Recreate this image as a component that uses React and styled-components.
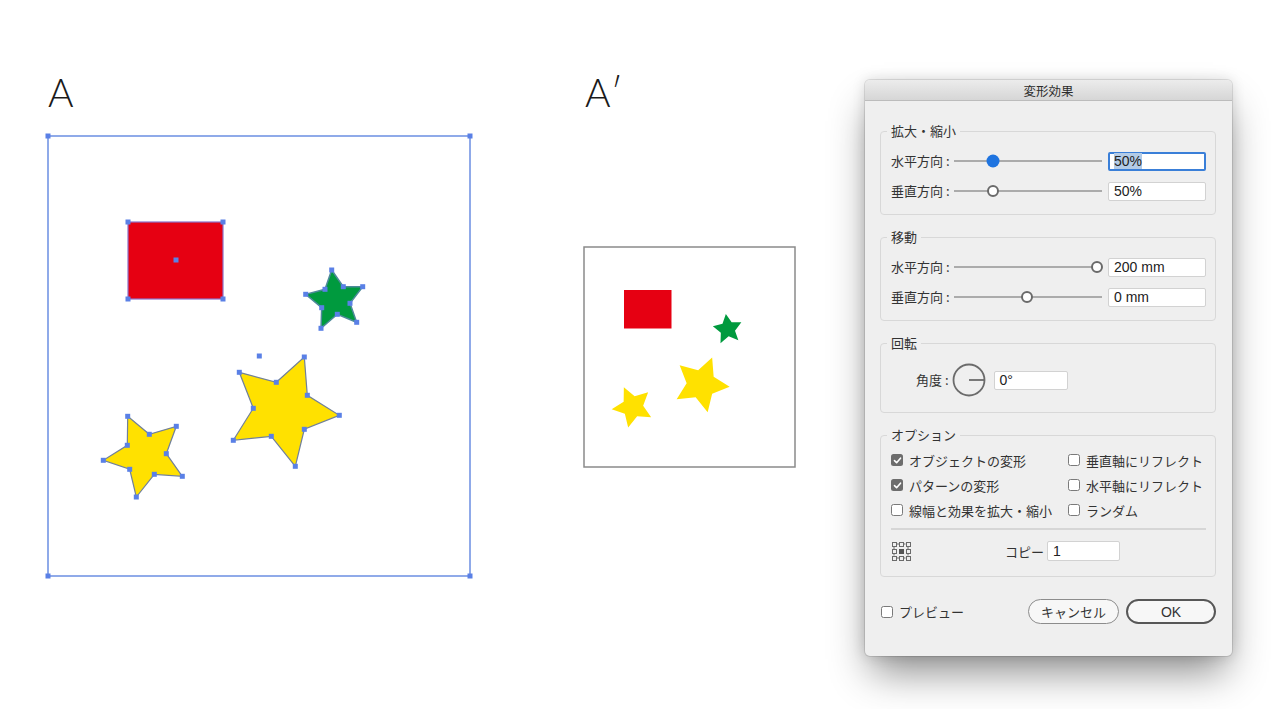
import React from 'react';
import styled, { createGlobalStyle } from 'styled-components';

const GlobalStyle = createGlobalStyle`
  html, body {
    margin: 0;
    padding: 0;
    background: #ffffff;
  }
  body {
    font-family: "Noto Sans CJK JP", "Noto Sans", sans-serif;
    overflow: hidden;
  }
`;

const Page = styled.div`
  width: 1271px;
  height: 709px;
  box-sizing: border-box;
  padding-left: 45px;
  display: flex;
  align-items: flex-start;
  background: #fff;
`;

const ArtColumn = styled.div`
  display: flex;
  flex-direction: column;
  margin-right: ${(p) => p.gap}px;
`;

const ArtLabel = styled.div`
  height: 45px;
  margin-top: 70px;
  padding-left: ${(p) => p.indent}px;
  font-family: Lato, "Noto Sans", sans-serif;
  font-weight: 300;
  font-size: 39px;
  line-height: 45px;
  color: #1a1a1a;
`;

const ArtBoard = styled.svg`
  display: block;
  margin-top: ${(p) => p.offset}px;
`;

/* ---------- dialog ---------- */

const Dialog = styled.div`
  width: 367px;
  margin-top: 80px;
  background: #efefef;
  border-radius: 5px;
  overflow: hidden;
  box-shadow: 0 22px 38px -6px rgba(0, 0, 0, 0.45), 0 0 14px rgba(0, 0, 0, 0.14),
    0 0 0 1px rgba(0, 0, 0, 0.1);
  padding-bottom: 32px;
  color: #333;
  font-size: 13px;
`;

const TitleBar = styled.div`
  height: 20px;
  border-bottom: 1px solid #bcbcbc;
  background: linear-gradient(#ececec, #d6d6d6);
  display: flex;
  align-items: center;
  justify-content: center;
  font-size: 12.5px;
  color: #2c2c2c;
`;

const Body = styled.div`
  padding: 22px 16px 0 15px;
`;

const Group = styled.fieldset`
  margin: 0 0 ${(p) => (p.last ? 0 : 14)}px;
  border: 1px solid #d8d8d8;
  border-radius: 4px;
  padding: ${(p) => p.pad || '11px 9px 12px 10px'};
  min-width: 0;
`;

const Legend = styled.legend`
  padding: 0 4px;
  margin-left: -4px;
  font-size: 13px;
  line-height: 16px;
  color: #333;
`;

const Stack = styled.div`
  display: flex;
  flex-direction: column;
  gap: 8px;
`;

const SliderRow = styled.div`
  display: grid;
  grid-template-columns: auto 1fr 98px;
  align-items: center;
  height: 22px;
`;

const RowLabel = styled.span`
  font-size: 13px;
  line-height: 16px;
  color: #333;
  white-space: nowrap;
`;

const Track = styled.div`
  position: relative;
  height: 1.5px;
  background: #ababab;
  margin: 0 6px 0 4px;
`;

const Thumb = styled.span`
  position: absolute;
  top: 50%;
  transform: translate(-50%, -50%);
  border-radius: 50%;
  box-sizing: border-box;
  width: ${(p) => (p.active ? 13 : 12)}px;
  height: ${(p) => (p.active ? 13 : 12)}px;
  background: ${(p) => (p.active ? '#1f74e0' : '#fff')};
  border: ${(p) => (p.active ? 'none' : '2px solid #6a6a6a')};
`;

const Field = styled.div`
  box-sizing: border-box;
  width: ${(p) => p.w || 98}px;
  height: ${(p) => p.h || 19}px;
  background: #fff;
  border: ${(p) => (p.focused ? '2px solid #3a7fd8' : '1px solid #d2d2d2')};
  border-radius: 2px;
  padding: 0 ${(p) => (p.focused ? 4 : 5)}px;
  display: flex;
  align-items: center;
  font-family: "Liberation Sans", Arial, sans-serif;
  font-size: 14px;
  color: #222;
`;

const Selected = styled.span`
  background: #b3cbe6;
`;

const RotateRow = styled.div`
  display: flex;
  align-items: center;
  height: 34px;
  padding-left: 25px;
`;

const Dial = styled.svg`
  display: block;
  margin: 0 8px 0 3px;
`;

const CheckGrid = styled.div`
  display: grid;
  grid-template-columns: 177px 1fr;
  row-gap: 7px;
`;

const CheckItem = styled.label`
  display: flex;
  align-items: center;
  gap: 6px;
  height: 18px;
  font-size: 13px;
  color: #333;
  white-space: nowrap;
`;

const Box = styled.span`
  width: 12px;
  height: 12px;
  box-sizing: border-box;
  border-radius: 2.5px;
  flex: none;
  display: flex;
  align-items: center;
  justify-content: center;
  background: ${(p) => (p.checked ? '#6d6d6d' : '#fff')};
  border: ${(p) => (p.checked ? 'none' : '1px solid #7a7a7a')};
`;

const Separator = styled.div`
  height: 2px;
  background: #d6d6d6;
  margin-top: 9px;
`;

const CopyRow = styled.div`
  display: flex;
  align-items: center;
  height: 20px;
  margin-top: 11px;
`;

const CopyLabel = styled.span`
  margin: 0 3px 0 94px;
  font-size: 13px;
  color: #333;
`;

const Footer = styled.div`
  display: flex;
  align-items: center;
  justify-content: space-between;
  padding: 0 16px;
  margin-top: 22px;
  height: 25px;
`;

const Buttons = styled.div`
  display: flex;
  gap: 7px;
`;

const Pill = styled.button`
  box-sizing: border-box;
  height: 25px;
  width: ${(p) => (p.primary ? 90 : 91)}px;
  border-radius: 13px;
  background: #f7f7f7;
  border: ${(p) => (p.primary ? '2px solid #575757' : '1px solid #8c8c8c')};
  font-family: ${(p) =>
    p.primary ? '"Liberation Sans", Arial, sans-serif' : '"Noto Sans CJK JP", sans-serif'};
  font-size: ${(p) => (p.primary ? 14 : 13)}px;
  color: #333;
  padding: 0;
`;

/* ---------- art data ---------- */

const greenStar = [
  [331.7, 270], [343.3, 286.7], [362.7, 286.7], [350, 303.3], [356.7, 322.3],
  [337.3, 314.3], [321, 328.3], [321.7, 307.7], [305.7, 294.3], [325, 289.3],
];
const smallStar = [
  [127.7, 416.3], [149.3, 434.3], [176.3, 426.3], [166.3, 453.7], [182.3, 476.3],
  [154.3, 474.3], [136.3, 497], [129.7, 469.3], [103.3, 460.3], [127.3, 445.3],
];
const bigStar = [
  [239.3, 372.3], [276.3, 382.3], [304.3, 357], [307.3, 395.3], [339.3, 415.3],
  [304.3, 429.3], [295.3, 466.3], [271.3, 436.3], [233.3, 440.3], [253.3, 408.3],
];

const pts = (list) => list.map((p) => p.join(',')).join(' ');

const Shapes = ({ outline }) => (
  <g>
    <rect x="128" y="222" width="95" height="77" fill="#e60012"
      stroke={outline ? '#8d72c8' : 'none'} strokeWidth="1.2" />
    <polygon points={pts(greenStar)} fill="#009a3e" stroke={outline ? '#4d8a9a' : 'none'} strokeWidth="1.5" />
    <polygon points={pts(smallStar)} fill="#ffe100" stroke={outline ? '#71809a' : 'none'} strokeWidth="1.2" />
    <polygon points={pts(bigStar)} fill="#ffe100" stroke={outline ? '#71809a' : 'none'} strokeWidth="1.2" />
  </g>
);

const handles = [
  [48, 136], [470, 136], [48, 576], [470, 576],
  [128, 222], [223, 222], [128, 299], [223, 299], [176, 260],
  [259.3, 356],
  ...greenStar, ...smallStar, ...bigStar,
];

const Check = () => (
  <svg width="9" height="9" viewBox="0 0 9 9">
    <path d="M1.5 4.6 L3.6 6.7 L7.5 2.2" fill="none" stroke="#fff" strokeWidth="1.6"
      strokeLinecap="round" strokeLinejoin="round" />
  </svg>
);

const RefPoint = () => (
  <svg width="20" height="20" viewBox="0 0 20 20">
    <g fill="none" stroke="#6a6a6a" strokeWidth="1">
      <path d="M5.5 3h2.5M12 3h2.5M5.5 17h2.5M12 17h2.5M3 5.5v2.5M3 12v2.5M17 5.5v2.5M17 12v2.5" />
      {[0, 1, 2].map((r) =>
        [0, 1, 2].map((c) =>
          r === 1 && c === 1 ? null : (
            <rect key={`${r}${c}`} x={1 + c * 7 + 0.5} y={1 + r * 7 + 0.5} width="4" height="4" />
          ),
        ),
      )}
    </g>
    <rect x="8" y="8" width="5" height="5" fill="#555" />
  </svg>
);

const Slider = ({ label, pos, active, value, focused }) => (
  <SliderRow>
    <RowLabel>{label}</RowLabel>
    <Track>
      <Thumb active={active} style={{ left: `${pos}%` }} />
    </Track>
    <Field focused={focused}>{focused ? <Selected>{value}</Selected> : value}</Field>
  </SliderRow>
);

const Option = ({ checked, children }) => (
  <CheckItem>
    <Box checked={checked}>{checked && <Check />}</Box>
    {children}
  </CheckItem>
);

export default function App() {
  return (
    <>
      <GlobalStyle />
      <Page>
        <ArtColumn gap={105}>
          <ArtLabel indent={3}>A</ArtLabel>
          <ArtBoard offset={18} width="431" height="446" viewBox="45 133 431 446">
            <rect x="48" y="136" width="422" height="440" fill="none" stroke="#6b8ee2" strokeWidth="1.5" />
            <Shapes outline />
            {handles.map(([x, y], i) => (
              <rect key={i} x={x - 2.5} y={y - 2.5} width="5" height="5" fill="#5a80e6" />
            ))}
          </ArtBoard>
        </ArtColumn>

        <ArtColumn gap={67}>
          <ArtLabel indent={4}>A′</ArtLabel>
          <ArtBoard offset={129} width="217" height="226" viewBox="581 244 217 226">
            <rect x="584" y="247" width="211" height="220" fill="#fff" stroke="#8a8a8a" strokeWidth="1.5" />
            <g transform="translate(584 247) scale(0.5) translate(-48 -136)">
              <Shapes />
            </g>
          </ArtBoard>
        </ArtColumn>

        <Dialog>
          <TitleBar>変形効果</TitleBar>
          <Body>
            <Group>
              <Legend>拡大・縮小</Legend>
              <Stack>
                <Slider label="水平方向 :" pos={26.5} active value="50%" focused />
                <Slider label="垂直方向 :" pos={26.5} value="50%" />
              </Stack>
            </Group>

            <Group>
              <Legend>移動</Legend>
              <Stack>
                <Slider label="水平方向 :" pos={96.6} value="200 mm" />
                <Slider label="垂直方向 :" pos={49.7} value="0 mm" />
              </Stack>
            </Group>

            <Group pad="12px 9px 15px 10px">
              <Legend>回転</Legend>
              <RotateRow>
                <RowLabel>角度 :</RowLabel>
                <Dial width="34" height="34" viewBox="0 0 34 34">
                  <circle cx="17" cy="17" r="15.5" fill="none" stroke="#6b6b6b" strokeWidth="1.8" />
                  <line x1="17" y1="17" x2="32.5" y2="17" stroke="#6b6b6b" strokeWidth="1.8" />
                </Dial>
                <Field w={74} h={19}>0°</Field>
              </RotateRow>
            </Group>

            <Group last pad="8px 9px 15px 10px">
              <Legend>オプション</Legend>
              <CheckGrid>
                <Option checked>オブジェクトの変形</Option>
                <Option>垂直軸にリフレクト</Option>
                <Option checked>パターンの変形</Option>
                <Option>水平軸にリフレクト</Option>
                <Option>線幅と効果を拡大・縮小</Option>
                <Option>ランダム</Option>
              </CheckGrid>
              <Separator />
              <CopyRow>
                <RefPoint />
                <CopyLabel>コピー</CopyLabel>
                <Field w={73} h={20}>1</Field>
              </CopyRow>
            </Group>
          </Body>

          <Footer>
            <Option>プレビュー</Option>
            <Buttons>
              <Pill>キャンセル</Pill>
              <Pill primary>OK</Pill>
            </Buttons>
          </Footer>
        </Dialog>
      </Page>
    </>
  );
}
